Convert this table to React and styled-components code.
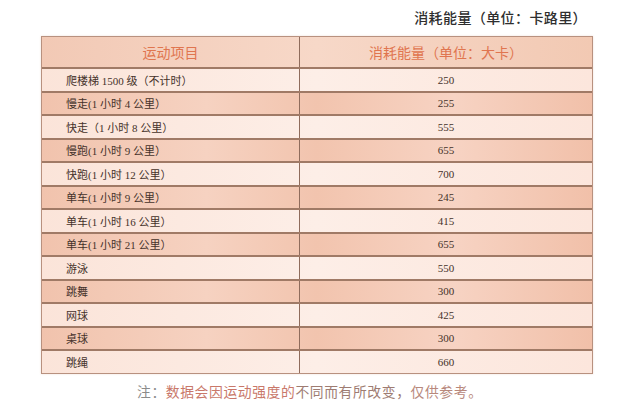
import React from "react";
import styled, { createGlobalStyle } from "styled-components";

const Global = createGlobalStyle`
  html, body { margin: 0; padding: 0; background: #ffffff; }
  body { width: 640px; height: 409px; overflow: hidden; }
`;

const Page = styled.div`
  width: 640px;
  height: 409px;
  display: flex;
  flex-direction: column;
  font-family: "Noto Sans CJK SC", "Noto Sans", sans-serif;
`;

const Title = styled.div`
  height: 36px;
  display: flex;
  align-items: center;
  justify-content: flex-end;
  padding-right: 53px;
  padding-bottom: 2px;
  box-sizing: border-box;
  font-size: 14px;
  font-weight: 500;
  color: #2e2e2e;
  letter-spacing: 0.4px;
`;

const Table = styled.div`
  margin-left: 41px;
  width: 552px;
  border: 1px solid #b8917f;
  box-sizing: border-box;
  display: flex;
  flex-direction: column;
  box-shadow: 0 0 2px rgba(200, 150, 130, 0.3);
`;

const Row = styled.div`
  display: grid;
  grid-template-columns: 257px 1fr;
  height: ${(p) => (p.$head ? "30px" : "23.5px")};
  box-sizing: border-box;
  border-top: ${(p) => (p.$first ? "none" : "2px solid #a07a66")};
  background: ${(p) =>
    p.$head
      ? "linear-gradient(90deg, #f2c9b5 0%, #f7d8c8 50%, #f2c9b3 100%)"
      : p.$dark
      ? "linear-gradient(90deg, #f1c3ad 0%, #f6d2c1 30%, #f2c4ae 50%, #f7d3c3 75%, #f1c0a9 100%)"
      : "linear-gradient(90deg, #fbe4d9 0%, #fdeee7 50%, #fce6dc 100%)"};
`;

const Cell = styled.div`
  display: flex;
  align-items: center;
  justify-content: ${(p) => (p.$center ? "center" : "flex-start")};
  padding-left: ${(p) => (p.$center ? "0" : "24px")};
  border-left: ${(p) => (p.$divider ? "1px solid #8f6c5c" : "none")};
  font-family: "Liberation Serif", "Noto Sans CJK SC", serif;
  font-size: 11px;
  color: #45322a;
  white-space: nowrap;
`;

const HeadCell = styled(Cell)`
  font-family: "Noto Sans CJK SC", sans-serif;
  font-size: 14px;
  color: #e0754f;
  justify-content: center;
  padding-left: 0;
  padding-bottom: 1px;
`;

const Note = styled.div`
  margin-top: 7px;
  padding-left: 137px;
  font-size: 13.8px;
  letter-spacing: 0.6px;
  color: #8b8b8b;
`;

const Seg = styled.span`
  color: ${(p) => p.$c};
`;

const rows = [
  ["爬楼梯 1500 级（不计时）", "250"],
  ["慢走(1 小时 4 公里）", "255"],
  ["快走（1 小时 8 公里）", "555"],
  ["慢跑(1 小时 9 公里）", "655"],
  ["快跑(1 小时 12 公里）", "700"],
  ["单车(1 小时 9 公里）", "245"],
  ["单车(1 小时 16 公里）", "415"],
  ["单车(1 小时 21 公里）", "655"],
  ["游泳", "550"],
  ["跳舞", "300"],
  ["网球", "425"],
  ["桌球", "300"],
  ["跳绳", "660"],
];

export default function App() {
  return (
    <Page>
      <Global />
      <Title>消耗能量（单位：卡路里）</Title>
      <Table>
        <Row $head $first>
          <HeadCell>运动项目</HeadCell>
          <HeadCell $divider>消耗能量（单位：大卡）</HeadCell>
        </Row>
        {rows.map(([name, val], i) => (
          <Row key={i} $dark={i % 2 === 1}>
            <Cell>{name}</Cell>
            <Cell $center $divider>
              {val}
            </Cell>
          </Row>
        ))}
      </Table>
      <Note>
        注：<Seg $c="#c9786a">数据会因运动强度的</Seg>
        <Seg $c="#9e7c72">不同而有所改变，</Seg>
        <Seg $c="#b8887c">仅供参考。</Seg>
      </Note>
    </Page>
  );
}
